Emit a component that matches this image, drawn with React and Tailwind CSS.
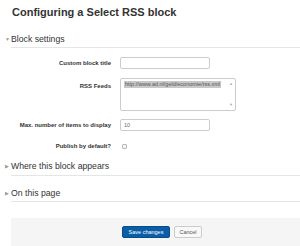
import React from "react";

const Label = ({ children }) => (
    <div className="w-[111px] shrink-0 text-right text-[6px] font-bold text-[#333]">{children}</div>
);

const Section = ({ title, open }) => (
    <div className="flex items-center h-[14px] text-[8.7px] text-[#333]">
        <span className="w-[11px] pl-[5px] text-[5px] text-[#999]">{open ? "▼" : "▶"}</span>
        <span>{title}</span>
    </div>
);

const App = () => {
    return (
        <div className="w-[300px] h-[246px] bg-white overflow-hidden" style={{ fontFamily: '"Liberation Sans", Arial, sans-serif' }}>
            <h1 className="pl-[12px] pt-[4px] h-[33px] text-[11px] font-bold text-[#333]">Configuring a Select RSS block</h1>
            <Section title="Block settings" open />
            <div className="ml-[11px] h-px bg-[#e5e5e5]"></div>
            <div className="pt-[9px]">
                <div className="flex items-center gap-[9px] h-[12px]">
                    <Label>Custom block title</Label>
                    <div className="w-[90px] h-[12px] border border-[#ccc] rounded-[2px] bg-white"></div>
                </div>
                <div className="flex items-start gap-[9px] mt-[9px]">
                    <div className="w-[111px] pt-[4px]"><Label>RSS Feeds</Label></div>
                    <div className="relative w-[116px] h-[33px] border border-[#ccc] rounded-[2px] bg-white">
                        <div className="absolute left-[3px] top-[2px] bg-[#c8c8c8] text-[5.5px] text-[#555] px-[1px] leading-[7px]">http://www.ad.nl/geld/economie/rss.xml</div>
                        <div className="absolute right-[2px] top-[2px] text-[4px] text-[#aaa]">▲</div>
                        <div className="absolute right-[2px] bottom-[2px] text-[4px] text-[#aaa]">▼</div>
                    </div>
                </div>
                <div className="flex items-center gap-[9px] h-[12px] mt-[8px]">
                    <Label>Max. number of items to display</Label>
                    <div className="w-[90px] h-[12px] border border-[#ccc] rounded-[2px] bg-white text-[5.5px] text-[#666] pl-[3px] flex items-center">10</div>
                </div>
                <div className="flex items-center gap-[9px] h-[8px] mt-[11px]">
                    <Label>Publish by default?</Label>
                    <div className="ml-[2px] w-[5px] h-[5px] border border-[#bbb] rounded-[1px] bg-[#f3f3f3]"></div>
                </div>
            </div>
            <div className="mt-[10px]">
                <Section title="Where this block appears" />
                <div className="ml-[11px] mt-[1px] h-px bg-[#e5e5e5]"></div>
            </div>
            <div className="mt-[11px]">
                <Section title="On this page" />
                <div className="ml-[11px] h-px bg-[#e5e5e5]"></div>
            </div>
            <div className="ml-[11px] mt-[16px] h-[32px] bg-[#f5f5f5] flex items-start pt-[8px] pl-[111px] gap-[4px]">
                <button className="w-[48px] h-[12px] rounded-[2px] bg-[#0a5ea8] text-white text-[5.5px] border border-[#0a4c8a]">Save changes</button>
                <button className="w-[28px] h-[12px] rounded-[2px] bg-[#f8f8f8] text-[#555] text-[5.5px] border border-[#ccc]">Cancel</button>
            </div>
        </div>
    );
};

export default App;
